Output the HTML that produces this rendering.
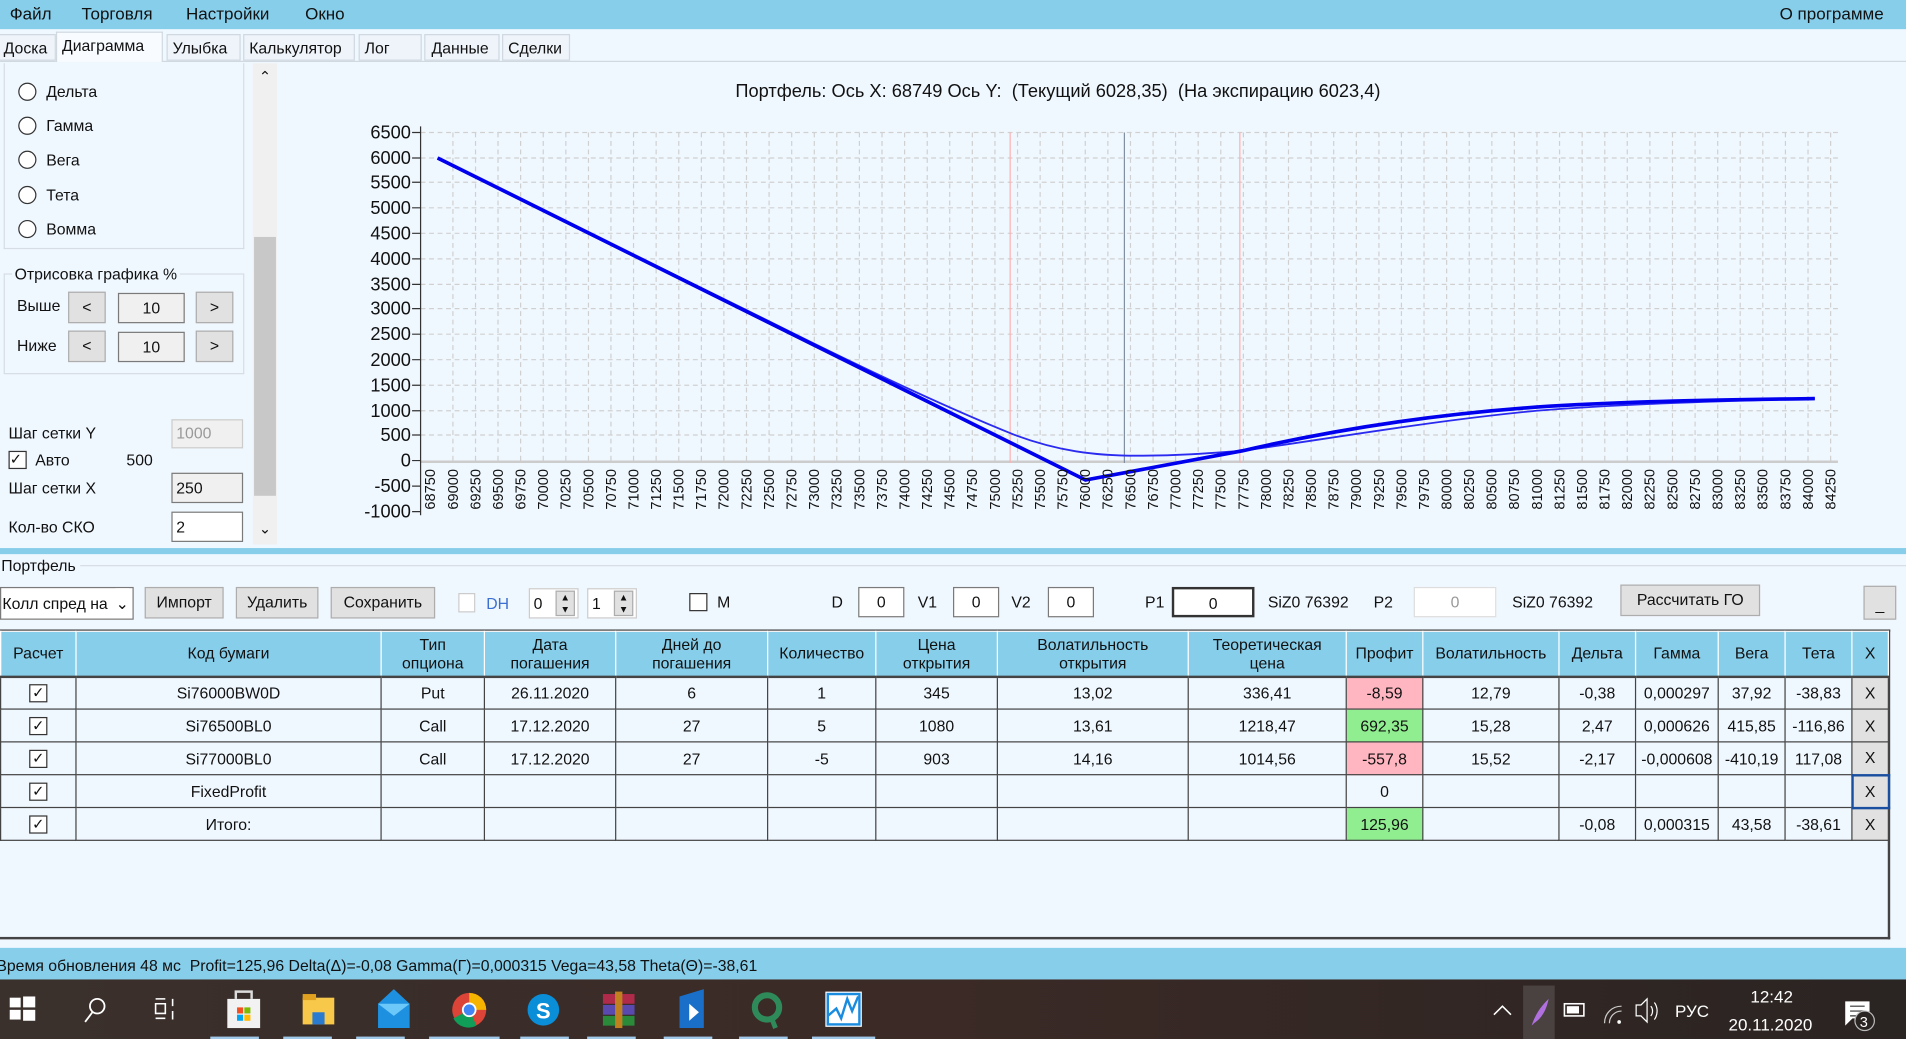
<!DOCTYPE html>
<html><head><meta charset="utf-8">
<style>
*{box-sizing:border-box;margin:0;padding:0}
html,body{width:1906px;height:1039px;overflow:hidden;background:#f0f8ff}
#w{position:absolute;left:0;top:0;width:1568px;height:855px;transform:scale(1.21556,1.2152);transform-origin:0 0;font-family:"Liberation Sans","DejaVu Sans",sans-serif;font-size:13px;color:#111;background:#f0f8ff}
.a{position:absolute}
.menu{left:0;top:0;width:1568px;height:24px;background:#87ceeb;font-size:14px}
.menu span{position:absolute;top:3px}
.tab{position:absolute;top:28px;height:22px;border:1px solid #d0d8e0;background:#eef4fa;padding:3px 4px 0;font-size:13px}
.radio{position:absolute;left:15px;width:15px;height:15px;border:1px solid #333;border-radius:50%;background:#fff}
.lbl{position:absolute;font-size:13px}
.btn{position:absolute;background:#e1e1e1;border:1px solid #adadad;text-align:center;font-size:13px}
.tb{position:absolute;background:#fff;border:1px solid #7a7a7a;text-align:center;font-size:13px}
table{border-collapse:collapse;position:absolute;left:0;top:519px;font-size:13px}
td{border:1px solid #444;text-align:center;height:27px;padding:0;white-space:nowrap}
th{background:#87ceeb;font-weight:normal;border:1px solid #fff;border-bottom:2px solid #444;height:37px;line-height:15px;font-size:13px}
.cb{display:inline-block;width:15px;height:15px;border:1px solid #333;background:#fff;font-size:12px;line-height:13px;vertical-align:middle}
.red{background:#ffb6c1}.grn{background:#90ee90}
.x{background:#e1e1e1}
</style></head><body><div id="w">
<div class="a menu"><span style="left:8px">Файл</span><span style="left:67px">Торговля</span><span style="left:153px">Настройки</span><span style="left:251px">Окно</span><span style="left:1464px">О программе</span></div>
<div class="a" style="left:0;top:50px;width:1568px;height:1px;background:#d0d8e0"></div>
<div class="tab" style="left:-2px;width:48px;background:#eef4fa">Доска</div>
<div class="tab" style="left:46px;top:26px;height:25px;width:88px;background:#f8fbff;border-bottom:none">Диаграмма</div>
<div class="tab" style="left:137px;width:61px">Улыбка</div>
<div class="tab" style="left:200px;width:92px">Калькулятор</div>
<div class="tab" style="left:295px;width:52px">Лог</div>
<div class="tab" style="left:349px;width:62px;padding-left:5px">Данные</div>
<div class="tab" style="left:413px;width:56px">Сделки</div>

<!-- left panel -->
<div class="a" style="left:3px;top:52px;width:198px;height:153px;border:1px solid #d6dde4;border-top:none"></div>
<div class="radio" style="top:68px"></div><div class="lbl" style="left:38px;top:68px">Дельта</div>
<div class="radio" style="top:96px"></div><div class="lbl" style="left:38px;top:96px">Гамма</div>
<div class="radio" style="top:124px"></div><div class="lbl" style="left:38px;top:124px">Вега</div>
<div class="radio" style="top:153px"></div><div class="lbl" style="left:38px;top:153px">Тета</div>
<div class="radio" style="top:181px"></div><div class="lbl" style="left:38px;top:181px">Вомма</div>
<div class="a" style="left:3px;top:225px;width:198px;height:83px;border:1px solid #d6dde4"></div>
<div class="lbl" style="left:10px;top:218px;background:#f0f8ff;padding:0 2px">Отрисовка графика %</div>
<div class="lbl" style="left:14px;top:244px">Выше</div>
<div class="btn" style="left:56px;top:240px;width:31px;height:26px;line-height:24px">&lt;</div>
<div class="tb" style="left:97px;top:241px;width:55px;height:25px;line-height:23px;background:#f0f0f0">10</div>
<div class="btn" style="left:161px;top:240px;width:31px;height:26px;line-height:24px">&gt;</div>
<div class="lbl" style="left:14px;top:277px">Ниже</div>
<div class="btn" style="left:56px;top:272px;width:31px;height:26px;line-height:24px">&lt;</div>
<div class="tb" style="left:97px;top:273px;width:55px;height:25px;line-height:23px;background:#f0f0f0">10</div>
<div class="btn" style="left:161px;top:272px;width:31px;height:26px;line-height:24px">&gt;</div>
<div class="lbl" style="left:7px;top:349px">Шаг сетки Y</div>
<div class="tb" style="left:141px;top:345px;width:59px;height:24px;line-height:22px;text-align:left;padding-left:3px;color:#999;border-color:#ccc;background:#f0f0f0">1000</div>
<div class="cb a" style="left:7px;top:371px">✓</div><div class="lbl" style="left:29px;top:371px">Авто</div><div class="lbl" style="left:104px;top:371px">500</div>
<div class="lbl" style="left:7px;top:394px">Шаг сетки X</div>
<div class="tb" style="left:141px;top:389px;width:59px;height:25px;line-height:23px;text-align:left;padding-left:3px;background:#f0f0f0">250</div>
<div class="lbl" style="left:7px;top:426px">Кол-во СКО</div>
<div class="tb" style="left:141px;top:421px;width:59px;height:25px;line-height:23px;text-align:left;padding-left:3px">2</div>
<div class="a" style="left:208px;top:52px;width:20px;height:396px;background:#f0f0f0"></div>
<div class="a" style="left:209px;top:195px;width:18px;height:213px;background:#c8c8c8"></div>
<div class="lbl" style="left:213px;top:56px;font-size:12px">&#8963;</div>
<div class="lbl" style="left:213px;top:428px;font-size:12px">&#8964;</div>

<!-- chart -->
<div class="lbl" style="left:605px;top:67px;font-size:15px">Портфель: Ось X: 68749 Ось Y:&nbsp; (Текущий 6028,35)&nbsp; (На экспирацию 6023,4)</div>
<svg class="a" style="left:0;top:0" width="1568" height="455" font-family="Liberation Sans, sans-serif">
<g stroke="#d0d0d0" stroke-dasharray="4,3" stroke-width="1">
<path d="M346 109H1512M346 130H1512M346 150H1512M346 171H1512M346 192H1512M346 213H1512M346 234H1512M346 254H1512M346 275H1512M346 296H1512M346 317H1512M346 338H1512M346 358H1512"/>
<path d="M372.6 109V381M391.2 109V381M409.7 109V381M428.3 109V381M446.9 109V381M465.5 109V381M484.1 109V381M502.6 109V381M521.2 109V381M539.8 109V381M558.4 109V381M577 109V381M595.5 109V381M614.1 109V381M632.7 109V381M651.3 109V381M669.9 109V381M688.4 109V381M707 109V381M725.6 109V381M744.2 109V381M762.8 109V381M781.3 109V381M799.9 109V381M818.5 109V381M837.1 109V381M855.7 109V381M874.2 109V381M892.8 109V381M911.4 109V381M930 109V381M948.6 109V381M967.1 109V381M985.7 109V381M1004.3 109V381M1022.9 109V381M1041.5 109V381M1060 109V381M1078.6 109V381M1097.2 109V381M1115.8 109V381M1134.4 109V381M1152.9 109V381M1171.5 109V381M1190.1 109V381M1208.7 109V381M1227.3 109V381M1245.8 109V381M1264.4 109V381M1283 109V381M1301.6 109V381M1320.2 109V381M1338.7 109V381M1357.3 109V381M1375.9 109V381M1394.5 109V381M1413.1 109V381M1431.6 109V381M1450.2 109V381M1468.8 109V381M1487.4 109V381M1506 109V381"/>
</g>
<path d="M346 380H1512" stroke="#ccc" stroke-width="2"/>
<path d="M831 109V381M1020 109V381" stroke="#ffb0b0"/>
<path d="M925 109V381" stroke="#8090a0"/>
<path d="M346 104V424" stroke="#333"/>
<g stroke="#333"><path d="M339 109H346M339 130H346M339 150H346M339 171H346M339 192H346M339 213H346M339 234H346M339 254H346M339 275H346M339 296H346M339 317H346M339 338H346M339 358H346M339 379H346M339 400H346M339 421H346"/></g>
<g font-size="15" text-anchor="end" fill="#111">
<text x="338" y="114">6500</text><text x="338" y="135">6000</text><text x="338" y="155">5500</text><text x="338" y="176">5000</text><text x="338" y="197">4500</text><text x="338" y="218">4000</text><text x="338" y="239">3500</text><text x="338" y="259">3000</text><text x="338" y="280">2500</text><text x="338" y="301">2000</text><text x="338" y="322">1500</text><text x="338" y="343">1000</text><text x="338" y="363">500</text><text x="338" y="384">0</text><text x="338" y="405">-500</text><text x="338" y="426">-1000</text>
</g>
<path d="M360 130 L640 268 C730 313 790 340 835 358 C870 371 900 375 935 375 C970 375 995 373 1022 371 C1100 360 1180 346 1264 338 C1340 332 1420 330 1493 328" fill="none" stroke="#2a2af0" stroke-width="1.5"/>
<path d="M360 130 L893 395 L1022 371 C1100 353 1180 341 1264 335 C1340 330 1420 329 1493 328" fill="none" stroke="#0000ee" stroke-width="3"/>
<g font-size="12" text-anchor="end" fill="#111">
<text transform="translate(358,386) rotate(-90)">68750</text><text transform="translate(376.6,386) rotate(-90)">69000</text><text transform="translate(395.2,386) rotate(-90)">69250</text><text transform="translate(413.7,386) rotate(-90)">69500</text><text transform="translate(432.3,386) rotate(-90)">69750</text><text transform="translate(450.9,386) rotate(-90)">70000</text><text transform="translate(469.5,386) rotate(-90)">70250</text><text transform="translate(488.1,386) rotate(-90)">70500</text><text transform="translate(506.6,386) rotate(-90)">70750</text><text transform="translate(525.2,386) rotate(-90)">71000</text><text transform="translate(543.8,386) rotate(-90)">71250</text><text transform="translate(562.4,386) rotate(-90)">71500</text><text transform="translate(581,386) rotate(-90)">71750</text><text transform="translate(599.5,386) rotate(-90)">72000</text><text transform="translate(618.1,386) rotate(-90)">72250</text><text transform="translate(636.7,386) rotate(-90)">72500</text><text transform="translate(655.3,386) rotate(-90)">72750</text><text transform="translate(673.9,386) rotate(-90)">73000</text><text transform="translate(692.4,386) rotate(-90)">73250</text><text transform="translate(711,386) rotate(-90)">73500</text><text transform="translate(729.6,386) rotate(-90)">73750</text><text transform="translate(748.2,386) rotate(-90)">74000</text><text transform="translate(766.8,386) rotate(-90)">74250</text><text transform="translate(785.3,386) rotate(-90)">74500</text><text transform="translate(803.9,386) rotate(-90)">74750</text><text transform="translate(822.5,386) rotate(-90)">75000</text><text transform="translate(841.1,386) rotate(-90)">75250</text><text transform="translate(859.7,386) rotate(-90)">75500</text><text transform="translate(878.2,386) rotate(-90)">75750</text><text transform="translate(896.8,386) rotate(-90)">76000</text><text transform="translate(915.4,386) rotate(-90)">76250</text><text transform="translate(934,386) rotate(-90)">76500</text><text transform="translate(952.6,386) rotate(-90)">76750</text><text transform="translate(971.1,386) rotate(-90)">77000</text><text transform="translate(989.7,386) rotate(-90)">77250</text><text transform="translate(1008.3,386) rotate(-90)">77500</text><text transform="translate(1026.9,386) rotate(-90)">77750</text><text transform="translate(1045.5,386) rotate(-90)">78000</text><text transform="translate(1064,386) rotate(-90)">78250</text><text transform="translate(1082.6,386) rotate(-90)">78500</text><text transform="translate(1101.2,386) rotate(-90)">78750</text><text transform="translate(1119.8,386) rotate(-90)">79000</text><text transform="translate(1138.4,386) rotate(-90)">79250</text><text transform="translate(1156.9,386) rotate(-90)">79500</text><text transform="translate(1175.5,386) rotate(-90)">79750</text><text transform="translate(1194.1,386) rotate(-90)">80000</text><text transform="translate(1212.7,386) rotate(-90)">80250</text><text transform="translate(1231.3,386) rotate(-90)">80500</text><text transform="translate(1249.8,386) rotate(-90)">80750</text><text transform="translate(1268.4,386) rotate(-90)">81000</text><text transform="translate(1287,386) rotate(-90)">81250</text><text transform="translate(1305.6,386) rotate(-90)">81500</text><text transform="translate(1324.2,386) rotate(-90)">81750</text><text transform="translate(1342.7,386) rotate(-90)">82000</text><text transform="translate(1361.3,386) rotate(-90)">82250</text><text transform="translate(1379.9,386) rotate(-90)">82500</text><text transform="translate(1398.5,386) rotate(-90)">82750</text><text transform="translate(1417.1,386) rotate(-90)">83000</text><text transform="translate(1435.6,386) rotate(-90)">83250</text><text transform="translate(1454.2,386) rotate(-90)">83500</text><text transform="translate(1472.8,386) rotate(-90)">83750</text><text transform="translate(1491.4,386) rotate(-90)">84000</text><text transform="translate(1510,386) rotate(-90)">84250</text>
</g>
</svg>

<div class="a" style="left:0;top:451px;width:1568px;height:5px;background:#87ceeb"></div>
<div class="lbl" style="left:1px;top:458px">Портфель</div>
<div class="a" style="left:66px;top:465px;width:1502px;height:1px;background:#d6dde4"></div>

<!-- toolbar -->
<div class="tb" style="left:0;top:483px;width:110px;height:27px;line-height:25px;text-align:left;padding-left:1px;overflow:hidden">Колл спред на&nbsp;<span style="position:absolute;right:3px;background:#fff">&#8964;</span></div>
<div class="btn" style="left:119px;top:483px;width:65px;height:26px;line-height:24px">Импорт</div>
<div class="btn" style="left:194px;top:483px;width:68px;height:26px;line-height:24px">Удалить</div>
<div class="btn" style="left:272px;top:483px;width:86px;height:26px;line-height:24px">Сохранить</div>
<div class="a" style="left:377px;top:488px;width:14px;height:16px;border:1px solid #ccc;background:#fff"></div><div class="lbl" style="left:400px;top:489px;color:#3b6fd0">DH</div>
<div class="tb" style="left:435px;top:484px;width:41px;height:25px;line-height:23px;text-align:left;padding-left:3px;border-color:#ccc">0</div><div class="btn" style="left:457px;top:486px;width:16px;height:21px;font-size:8px;line-height:10px">▲<br>▼</div>
<div class="tb" style="left:483px;top:484px;width:41px;height:25px;line-height:23px;text-align:left;padding-left:3px;border-color:#ccc">1</div><div class="btn" style="left:505px;top:486px;width:16px;height:21px;font-size:8px;line-height:10px">▲<br>▼</div>
<div class="a" style="left:567px;top:488px;width:15px;height:15px;border:1px solid #333;background:#fff"></div><div class="lbl" style="left:590px;top:488px">M</div>
<div class="lbl" style="left:684px;top:488px">D</div><div class="tb" style="left:706px;top:483px;width:38px;height:25px;line-height:23px">0</div>
<div class="lbl" style="left:755px;top:488px">V1</div><div class="tb" style="left:784px;top:483px;width:38px;height:25px;line-height:23px">0</div>
<div class="lbl" style="left:832px;top:488px">V2</div><div class="tb" style="left:862px;top:483px;width:38px;height:25px;line-height:23px">0</div>
<div class="lbl" style="left:942px;top:488px">P1</div><div class="tb" style="left:964px;top:483px;width:68px;height:25px;line-height:23px;border:2px solid #333">0</div>
<div class="lbl" style="left:1043px;top:488px">SiZ0 76392</div>
<div class="lbl" style="left:1130px;top:488px">P2</div><div class="tb" style="left:1163px;top:483px;width:68px;height:25px;line-height:23px;color:#999;border-color:#ddd">0</div>
<div class="lbl" style="left:1244px;top:488px">SiZ0 76392</div>
<div class="btn" style="left:1333px;top:481px;width:115px;height:26px;line-height:24px">Рассчитать ГО</div>
<div class="btn" style="left:1533px;top:482px;width:27px;height:28px;line-height:30px">_</div>

<div class="a" style="left:0;top:518px;width:1555px;height:255px;border-right:2px solid #444;border-bottom:2px solid #444;border-top:2px solid #444"></div>
<table>
<colgroup><col style="width:62px"><col style="width:251px"><col style="width:85px"><col style="width:108px"><col style="width:125px"><col style="width:89px"><col style="width:100px"><col style="width:157px"><col style="width:130px"><col style="width:63px"><col style="width:112px"><col style="width:63px"><col style="width:68px"><col style="width:55px"><col style="width:55px"><col style="width:30px"></colgroup>
<tr><th>Расчет</th><th>Код бумаги</th><th>Тип<br>опциона</th><th>Дата<br>погашения</th><th>Дней до<br>погашения</th><th>Количество</th><th>Цена<br>открытия</th><th>Волатильность<br>открытия</th><th>Теоретическая<br>цена</th><th>Профит</th><th>Волатильность</th><th>Дельта</th><th>Гамма</th><th>Вега</th><th>Тета</th><th>X</th></tr>
<tr><td><span class="cb">✓</span></td><td>Si76000BW0D</td><td>Put</td><td>26.11.2020</td><td>6</td><td>1</td><td>345</td><td>13,02</td><td>336,41</td><td class="red">-8,59</td><td>12,79</td><td>-0,38</td><td>0,000297</td><td>37,92</td><td>-38,83</td><td class="x">X</td></tr>
<tr><td><span class="cb">✓</span></td><td>Si76500BL0</td><td>Call</td><td>17.12.2020</td><td>27</td><td>5</td><td>1080</td><td>13,61</td><td>1218,47</td><td class="grn">692,35</td><td>15,28</td><td>2,47</td><td>0,000626</td><td>415,85</td><td>-116,86</td><td class="x">X</td></tr>
<tr><td><span class="cb">✓</span></td><td>Si77000BL0</td><td>Call</td><td>17.12.2020</td><td>27</td><td>-5</td><td>903</td><td>14,16</td><td>1014,56</td><td class="red">-557,8</td><td>15,52</td><td>-2,17</td><td>-0,000608</td><td>-410,19</td><td>117,08</td><td class="x">X</td></tr>
<tr><td><span class="cb">✓</span></td><td>FixedProfit</td><td></td><td></td><td></td><td></td><td></td><td></td><td></td><td>0</td><td></td><td></td><td></td><td></td><td></td><td class="x" style="border:2px solid #1a4fa0">X</td></tr>
<tr><td><span class="cb">✓</span></td><td>Итого:</td><td></td><td></td><td></td><td></td><td></td><td></td><td></td><td class="grn">125,96</td><td></td><td>-0,08</td><td>0,000315</td><td>43,58</td><td>-38,61</td><td class="x">X</td></tr>
</table>

<div class="a" style="left:0;top:780px;width:1568px;height:26px;background:#87ceeb"></div>
<div class="lbl" style="left:-3px;top:787px;font-size:13px">Время обновления 48 мс&nbsp; Profit=125,96 Delta(Δ)=-0,08 Gamma(Γ)=0,000315 Vega=43,58 Theta(Θ)=-38,61</div>

<!-- taskbar -->
<div class="a" style="left:0;top:806px;width:1568px;height:49px;background:linear-gradient(90deg,#3a302c,#3b2a26 50%,#2a2422)"></div>
<svg class="a" style="left:0;top:806px" width="1568" height="49">
<g fill="#fff"><rect x="8" y="15" width="9" height="8"/><rect x="19" y="14" width="10" height="9"/><rect x="8" y="25" width="9" height="8"/><rect x="19" y="25" width="10" height="9"/></g>
<circle cx="80" cy="22" r="6" fill="none" stroke="#fff" stroke-width="1.5"/><path d="M76 27L70 35" stroke="#fff" stroke-width="1.5"/>
<path d="M128 16h8M128 32h8M128 20h8v8h-8zM142 16v6M142 26v7" stroke="#fff" fill="none" stroke-width="1.3"/>
<rect x="187" y="16" width="27" height="24" fill="#f2f2f2"/><path d="M194 16v-6h13v6" stroke="#ddd" fill="none" stroke-width="2"/><rect x="195" y="23" width="5" height="5" fill="#f25022"/><rect x="201" y="23" width="5" height="5" fill="#7fba00"/><rect x="195" y="29" width="5" height="5" fill="#00a4ef"/><rect x="201" y="29" width="5" height="5" fill="#ffb900"/>
<rect x="249" y="15" width="26" height="22" fill="#f8c84a"/><rect x="249" y="12" width="11" height="5" fill="#e0a020"/><rect x="257" y="27" width="10" height="10" fill="#2a7ad0"/>
<path d="M311 20l13-12 13 12v20h-26z" fill="#1e90e0"/><path d="M311 20l13 10 13-10" fill="#6cc8f8"/>
<circle cx="386" cy="25" r="14" fill="#db4437"/><path d="M386 25L373 32A14 14 0 0 0 392 38z" fill="#0f9d58"/><path d="M386 11A14 14 0 0 1 400 25L386 25z" fill="#f4b400"/><circle cx="386" cy="25" r="6" fill="#fff"/><circle cx="386" cy="25" r="4.5" fill="#4285f4"/>
<circle cx="447" cy="25" r="13" fill="#0a8ed8"/><text x="441" y="32" fill="#fff" font-size="18" font-weight="bold" font-family="Liberation Sans">S</text>
<rect x="496" y="12" width="26" height="8" fill="#b02a4a"/><rect x="496" y="21" width="26" height="8" fill="#5a4ab0"/><rect x="496" y="30" width="26" height="8" fill="#2a8a3a"/><rect x="506" y="10" width="6" height="30" fill="#c08020"/>
<path d="M559 14l20-6v32h-20z" fill="#1a70c8"/><path d="M567 20l8 7-8 7z" fill="#fff"/>
<circle cx="631" cy="23" r="10" fill="none" stroke="#2f8a5a" stroke-width="5"/><path d="M634 30l4 10" stroke="#2f8a5a" stroke-width="4"/>
<rect x="679" y="10" width="30" height="29" fill="#fff"/><rect x="681" y="12" width="26" height="25" fill="#fff" stroke="#1a8ce0" stroke-width="2"/><path d="M681 30l7-6 4 8 5-16 4 10 5-12" stroke="#1a8ce0" fill="none" stroke-width="2"/>
<g fill="#a0c8e8"><rect x="173" y="47" width="40" height="2"/><rect x="233" y="47" width="40" height="2"/><rect x="293" y="47" width="40" height="2"/><rect x="353" y="47" width="58" height="2"/><rect x="428" y="47" width="40" height="2"/><rect x="483" y="47" width="40" height="2"/><rect x="546" y="47" width="40" height="2"/><rect x="608" y="47" width="40" height="2"/><rect x="668" y="47" width="52" height="2"/></g>
<path d="M1229 29l7-7 7 7" stroke="#fff" fill="none" stroke-width="1.3"/>
<rect x="1253" y="5" width="26" height="44" fill="#4a4240"/><path d="M1260 38c4-12 10-18 14-22-2 10-6 16-12 20" fill="#b070e0"/>
<rect x="1287" y="20" width="16" height="10" fill="none" stroke="#fff" stroke-width="1.3"/><rect x="1289" y="22" width="10" height="6" fill="#fff"/>
<path d="M1320 36c0-8 6-14 14-14M1324 36c0-5 4-10 10-10" stroke="#ccc" fill="none"/><circle cx="1332" cy="35" r="1.5" fill="#fff"/>
<path d="M1346 21h4l5-5v19l-5-5h-4z" stroke="#fff" fill="none"/><path d="M1358 22c2 2 2 6 0 8M1361 19c3 4 3 10 0 14" stroke="#fff" fill="none"/>
<text x="1378" y="31" fill="#fff" font-size="14" font-family="Liberation Sans">РУС</text>
<text x="1440" y="19" fill="#fff" font-size="14" font-family="Liberation Sans">12:42</text>
<text x="1422" y="42" fill="#fff" font-size="14" font-family="Liberation Sans">20.11.2020</text>
<path d="M1518 18h20v14h-14l-6 6z" fill="#fff"/><path d="M1522 22h12M1522 26h12M1522 30h8" stroke="#333"/>
<circle cx="1534" cy="34" r="8" fill="#2a2422" stroke="#bbb"/><text x="1530" y="39" fill="#fff" font-size="12" font-family="Liberation Sans">3</text>
</svg>
</div></body></html>
